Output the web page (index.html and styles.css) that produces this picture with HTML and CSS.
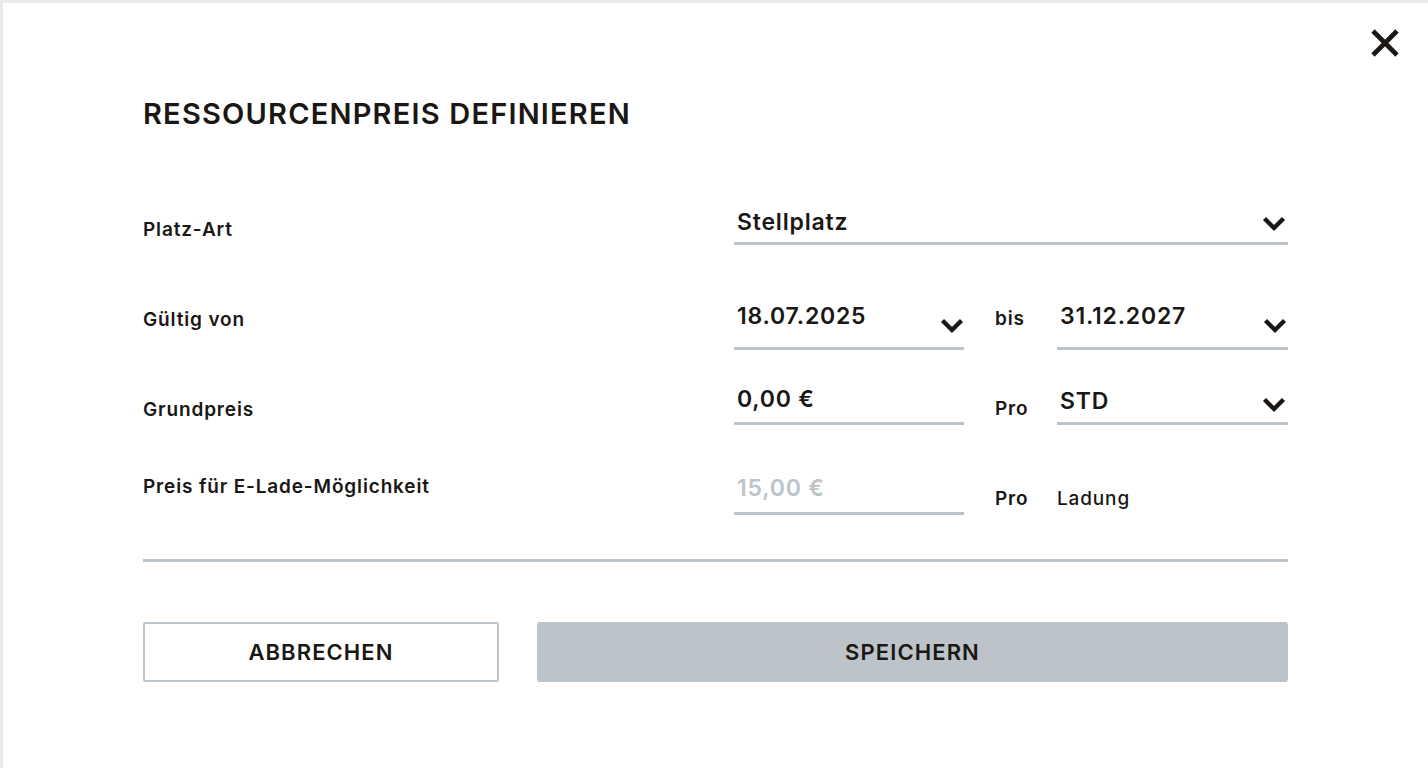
FILE: index.html
```html
<!DOCTYPE html>
<html lang="de">
<head>
<meta charset="utf-8">
<title>Ressourcenpreis definieren</title>
<link rel="stylesheet" href="styles.css">
</head>
<body>
<div class="modal">
  <div class="topbar">
    <button class="close" aria-label="Schließen">
      <svg width="30" height="30" viewBox="0 0 30 30"><path d="M3 3 L27 27 M27 3 L3 27" stroke="#1a1715" stroke-width="4.6" fill="none"/></svg>
    </button>
  </div>
  <div class="content">
    <h1 class="title">RESSOURCENPREIS DEFINIEREN</h1>

    <div class="row r1">
      <div class="label">Platz-Art</div>
      <div class="field wide">
        <span class="value">Stellplatz</span>
        <svg class="chev" width="24" height="16" viewBox="0 0 24 16"><polyline points="2.5,2.5 12,12 21.5,2.5" stroke="#1a1715" stroke-width="4.4" fill="none"/></svg>
      </div>
    </div>

    <div class="row r2">
      <div class="label">Gültig von</div>
      <div class="field">
        <span class="value">18.07.2025</span>
        <svg class="chev" width="24" height="16" viewBox="0 0 24 16"><polyline points="2.5,2.5 12,12 21.5,2.5" stroke="#1a1715" stroke-width="4.4" fill="none"/></svg>
      </div>
      <div class="mid">bis</div>
      <div class="field">
        <span class="value">31.12.2027</span>
        <svg class="chev" width="24" height="16" viewBox="0 0 24 16"><polyline points="2.5,2.5 12,12 21.5,2.5" stroke="#1a1715" stroke-width="4.4" fill="none"/></svg>
      </div>
    </div>

    <div class="row r3">
      <div class="label">Grundpreis</div>
      <div class="field">
        <span class="value">0,00 €</span>
      </div>
      <div class="mid">Pro</div>
      <div class="field">
        <span class="value std">STD</span>
        <svg class="chev" width="24" height="16" viewBox="0 0 24 16"><polyline points="2.5,2.5 12,12 21.5,2.5" stroke="#1a1715" stroke-width="4.4" fill="none"/></svg>
      </div>
    </div>

    <div class="row r4">
      <div class="label">Preis für E-Lade-Möglichkeit</div>
      <div class="field">
        <span class="value muted">15,00 €</span>
      </div>
      <div class="mid">Pro</div>
      <div class="unit">Ladung</div>
    </div>

    <div class="divider"></div>

    <div class="actions">
      <button class="btn btn-outline">ABBRECHEN</button>
      <button class="btn btn-fill">SPEICHERN</button>
    </div>
  </div>
</div>
</body>
</html>
```

FILE: styles.css
```css
html, body {
  margin: 0;
  padding: 0;
  height: 100%;
}
body {
  background: #e9ebee;
  font-family: Inter, "Noto Sans", sans-serif;
  color: #1a1715;
  overflow: hidden;
}
.modal {
  margin: 3px 0 0 3px;
  background: #ffffff;
  height: calc(100% - 3px);
  box-sizing: border-box;
}
.topbar {
  display: flex;
  justify-content: flex-end;
  padding: 25px 28px 0 0;
}
.close {
  border: 0;
  background: none;
  padding: 0;
  width: 30px;
  height: 30px;
  cursor: pointer;
}
.close svg { display: block; }
.content {
  padding: 0 140px 0 140px;
}
.title {
  margin: 41px 0 0 0;
  font-size: 29px;
  line-height: 29px;
  font-weight: 600;
  letter-spacing: 1.2px;
}
.row {
  display: grid;
  grid-template-columns: 591px 230px 93px 231px;
  align-items: end;
}
.r1 { height: 117px; }
.r2 { height: 105px; }
.r3 { height: 75px; }
.r4 { height: 90px; }

.label, .mid, .unit {
  font-size: 19px;
  line-height: 19px;
  font-weight: 600;
  letter-spacing: 0.85px;
}
.mid { padding-left: 31px; }
.unit { font-weight: 500; padding-left: 0; }

.field {
  display: flex;
  justify-content: space-between;
  align-items: flex-end;
  border-bottom: 3px solid #bcc4c9;
  padding-left: 3px;
}
.field.wide { grid-column: 2 / 5; }
.value {
  font-size: 23px;
  line-height: 23px;
  font-weight: 600;
  letter-spacing: 0.8px;
}
.value.muted { color: #bcc4c9; }
.chev { display: block; flex: none; }

.r1 .label { padding-bottom: 6px; }
.r1 .value { margin-bottom: 8px; }
.r1 .chev { margin: 0 2px 10px 0; }

.r2 .label { padding-bottom: 21px; }
.r2 .mid { padding-bottom: 22px; }
.r2 .value { margin-bottom: 19px; }
.r2 .chev { margin: 0 0 13px 0; }
.r2 .field:last-child .chev { margin-right: 1px; }

.r3 .label { padding-bottom: 6px; }
.r3 .mid { padding-bottom: 7px; }
.r3 .value { margin-bottom: 11px; }
.r3 .value.std { margin-bottom: 9px; }
.r3 .chev { margin: 0 2px 9px 0; }

.r4 .label { padding-bottom: 19px; }
.r4 .mid, .r4 .unit { padding-bottom: 7px; }
.r4 .value { margin-bottom: 12px; }

.divider {
  margin-top: 44px;
  height: 3px;
  background: #bcc4c9;
}
.actions {
  display: grid;
  grid-template-columns: 356px 1fr;
  gap: 38px;
  margin-top: 60px;
}
.btn {
  height: 60px;
  font-family: Inter, "Noto Sans", sans-serif;
  font-size: 22px;
  font-weight: 600;
  color: #1a1715;
  letter-spacing: 1.1px;
  cursor: pointer;
}
.btn-outline {
  background: #ffffff;
  border: 2px solid #bcc4c9;
  border-radius: 2px;
}
.btn-fill {
  background: #bcc4c9;
  border: 0;
  border-radius: 3px;
}
```
